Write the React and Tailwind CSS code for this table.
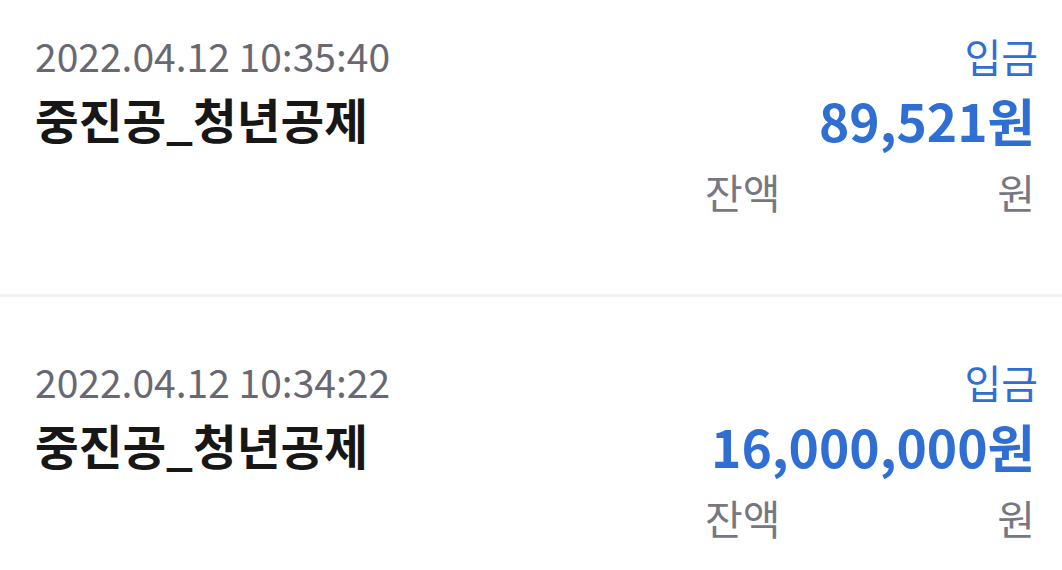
export default function App() {
  const rows = [
    { date: "2022.04.12 10:35:40", name: "중진공_청년공제", amount: "89,521원" },
    { date: "2022.04.12 10:34:22", name: "중진공_청년공제", amount: "16,000,000원" },
  ];
  return (
    <div className="w-[1062px] h-[570px] overflow-hidden bg-white" style={{ fontFamily: '"Noto Sans CJK KR", "Noto Sans", sans-serif' }}>
      {rows.map((r, i) => (
        <div
          key={i}
          className={i === 0 ? "h-[297px] pt-[27px] border-b-[3px] border-[#f2f2f4] pl-[35px] pr-[27px]" : "pt-[56px] pl-[35px] pr-[27px]"}
        >
          <div className="flex justify-between items-start">
            <div className="flex flex-col">
              <div className="text-[39px] leading-[57px] text-[#686872]">{r.date}</div>
              <div className="text-[47.5px] leading-[70px] font-bold text-[#171717]">{r.name}</div>
            </div>
            <div className="flex flex-col items-end">
              <div className="text-[40px] leading-[58px] text-[#2f6fd3] -mr-[3px]">입금</div>
              <div className="text-[51.5px] leading-[70px] font-bold text-[#2f6fd3]">{r.amount}</div>
              <div className="w-[330px] flex justify-between text-[41px] leading-[72px] text-[#777782]">
                <span>잔액</span>
                <span>원</span>
              </div>
            </div>
          </div>
        </div>
      ))}
    </div>
  );
}
